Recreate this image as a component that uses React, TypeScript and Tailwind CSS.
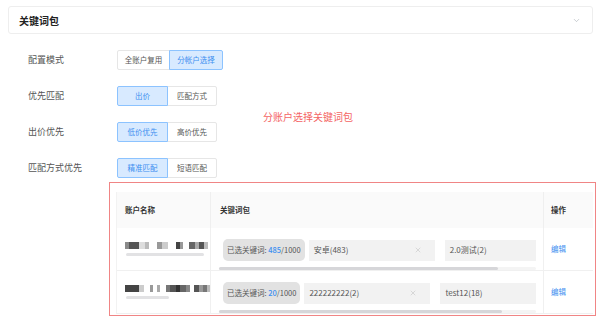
import { ChevronDown, X } from "lucide-react";

interface ToggleOption {
  label: string;
  width: string;
  active?: boolean;
}

interface FormRow {
  label: string;
  options: ToggleOption[];
}

interface Segment {
  w: number;
  c: string;
}

interface AccountRow {
  name: Segment[];
  underline: number;
  selected: number;
  tags: [string, string];
  thumb: number;
}

const FORM_ROWS: FormRow[] = [
  {
    label: "配置模式",
    options: [
      { label: "全账户复用", width: "w-[53px]" },
      { label: "分帐户选择", width: "w-[54px]", active: true },
    ],
  },
  {
    label: "优先匹配",
    options: [
      { label: "出价", width: "w-[51px]", active: true },
      { label: "匹配方式", width: "w-[50px]" },
    ],
  },
  {
    label: "出价优先",
    options: [
      { label: "低价优先", width: "w-[51px]", active: true },
      { label: "高价优先", width: "w-[50px]" },
    ],
  },
  {
    label: "匹配方式优先",
    options: [
      { label: "精准匹配", width: "w-[51px]", active: true },
      { label: "短语匹配", width: "w-[50px]" },
    ],
  },
];

const ACCOUNT_ROWS: AccountRow[] = [
  {
    name: [
      { w: 4, c: "#8a8a8a" },
      { w: 10, c: "#555" },
      { w: 6, c: "#ddd" },
      { w: 4, c: "#bbb" },
      { w: 8, c: "#fff" },
      { w: 5, c: "#999" },
      { w: 6, c: "#ccc" },
      { w: 8, c: "#fff" },
      { w: 4, c: "#444" },
      { w: 3, c: "#999" },
      { w: 6, c: "#fff" },
      { w: 6, c: "#666" },
      { w: 4, c: "#aaa" },
      { w: 5, c: "#555" },
      { w: 4, c: "#bbb" },
    ],
    underline: 78,
    selected: 485,
    tags: ["安卓(483)", "2.0测试(2)"],
    thumb: 279,
  },
  {
    name: [
      { w: 14, c: "#444" },
      { w: 5, c: "#ccc" },
      { w: 6, c: "#fff" },
      { w: 3, c: "#999" },
      { w: 4, c: "#fff" },
      { w: 3, c: "#aaa" },
      { w: 6, c: "#fff" },
      { w: 4, c: "#777" },
      { w: 6, c: "#555" },
      { w: 4, c: "#333" },
      { w: 6, c: "#666" },
      { w: 4, c: "#888" },
      { w: 4, c: "#fff" },
      { w: 5, c: "#555" },
      { w: 4, c: "#999" },
      { w: 4, c: "#777" },
      { w: 3, c: "#bbb" },
    ],
    underline: 43,
    selected: 20,
    tags: ["222222222(2)", "test12(18)"],
    thumb: 283,
  },
];

function ToggleGroup({ options }: { options: ToggleOption[] }) {
  return (
    <div className="flex h-[20px]">
      {options.map((option, index) => (
        <div
          key={option.label}
          className={[
            "flex h-full items-center justify-center border text-[7.5px]",
            option.width,
            index === 0 ? "rounded-l-[2px]" : "-ml-px rounded-r-[2px]",
            option.active
              ? "relative z-10 border-[#8cc3ff] bg-[#d8eaff] text-[#3d8ff0]"
              : "border-[#e6e6e6] bg-white text-[#555]",
          ].join(" ")}
        >
          {option.label}
        </div>
      ))}
    </div>
  );
}

function BlurredName({ segments, underline }: { segments: Segment[]; underline: number }) {
  return (
    <div className="flex flex-col gap-[4px] pl-[8px]">
      <div className="flex h-[7px] blur-[0.5px]">
        {segments.map((s, i) => (
          <div key={i} className="h-full" style={{ width: s.w, backgroundColor: s.c }} />
        ))}
      </div>
      <div
        className="ml-[1px] h-[3px] rounded-full bg-[#e2e2e4] blur-[0.3px]"
        style={{ width: underline }}
      />
    </div>
  );
}

export default function App() {
  return (
    <div className="h-[324px] w-[600px] overflow-hidden bg-white font-['Noto_Sans_CJK_SC',sans-serif]">
      <div className="pl-[8px] pr-[7px] pt-[6px]">
        <div className="flex h-[28px] items-center justify-between rounded-[3px] border border-[#eeeeee] pl-[10px] pr-[11px]">
          <span className="text-[10px] font-bold text-[#222]">关键词包</span>
          <ChevronDown className="h-[9px] w-[9px] text-[#a8aeb6]" strokeWidth={1.6} />
        </div>
      </div>

      <div className="mt-[16px] flex">
        <div className="flex flex-col gap-[16px] pl-[28px]">
          {FORM_ROWS.map((row) => (
            <div key={row.label} className="flex items-center">
              <span className="w-[89px] text-[9px] text-[#555]">{row.label}</span>
              <ToggleGroup options={row.options} />
            </div>
          ))}
        </div>
        <div className="pl-[40px] pt-[61px] text-[10px] leading-[12px] text-[#f46464]">
          分账户选择关键词包
        </div>
      </div>

      <div className="ml-[109px] mt-[4px] h-[134px] w-[487px] overflow-hidden border border-[#f08585] pl-[6px] pr-[2px] pt-[9px]">
        <div className="w-[477px] border-l border-[#f2f2f2]">
          <div className="grid h-[36px] grid-cols-[94px_333px_50px] bg-[#fafafa] text-[7.5px] font-bold text-[#333]">
            <div className="flex items-center border-r border-[#efefef] pl-[8px]">账户名称</div>
            <div className="flex items-center border-r border-[#efefef] pl-[9px]">关键词包</div>
            <div className="flex items-center pl-[7px]">操作</div>
          </div>

          {ACCOUNT_ROWS.map((row, idx) => (
            <div
              key={idx}
              className="grid h-[43px] grid-cols-[94px_333px_50px] border-b border-[#f0f0f0]"
            >
              <div className="flex items-center border-r border-[#f0f0f0]">
                <BlurredName segments={row.name} underline={row.underline} />
              </div>
              <div className="border-r border-[#f0f0f0] pl-[8px] pt-[11px]">
                <div className="w-[317px] overflow-hidden">
                  <div className="flex h-[22px] items-center pl-[4px] text-[8px] text-[#555]">
                    <div className="flex h-[22px] shrink-0 items-center rounded-[5px] bg-[#e2e2e2] px-[4px] text-[7.5px]">
                      已选关键词:&nbsp;
                      <span className="font-medium text-[#3d8ff0]">{row.selected}</span>
                      /1000
                    </div>
                    <div className="ml-[4px] flex h-[21px] w-[126px] shrink-0 items-center justify-between bg-[#f2f2f2] pl-[5px] pr-[13px]">
                      <span>{row.tags[0]}</span>
                      <X className="h-[8px] w-[8px] text-[#bdbdbd]" strokeWidth={1.5} />
                    </div>
                    <div className="ml-[10px] flex h-[21px] w-[120px] shrink-0 items-center bg-[#f2f2f2] pl-[5px]">
                      {row.tags[1]}
                    </div>
                  </div>
                </div>
                <div className="mt-[6px] h-[3px] w-[317px] rounded-full bg-[#f4f4f4]">
                  <div
                    className="h-full rounded-full bg-[#d6d6d9]"
                    style={{ width: row.thumb }}
                  />
                </div>
              </div>
              <div className="flex items-center pl-[7px] text-[7.5px] text-[#3d8ff0]">编辑</div>
            </div>
          ))}
        </div>
      </div>
    </div>
  );
}
